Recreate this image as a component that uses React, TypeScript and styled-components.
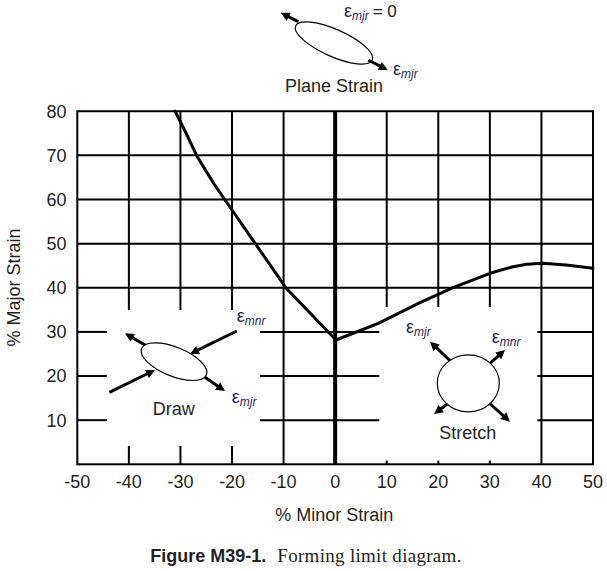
import { FC } from 'react';
import styled, { createGlobalStyle } from 'styled-components';

const GlobalStyle = createGlobalStyle`
  html,
  body {
    margin: 0;
    padding: 0;
    background: #ffffff;
  }

  body {
    font-family: 'Liberation Sans', Arial, sans-serif;
    color: #231f20;
  }
`;

const Figure = styled.figure`
  margin: 0;
  width: 607px;
  display: flex;
  flex-direction: column;
  align-items: center;
`;

const Chart = styled.svg`
  display: block;
  width: 607px;
  height: 540px;
`;

const Caption = styled.figcaption`
  display: flex;
  align-items: baseline;
  gap: 11px;
  padding: 5px 0 0 5px;
  line-height: 22px;
`;

const CaptionTag = styled.span`
  font-family: 'Liberation Sans', Arial, sans-serif;
  font-weight: 700;
  font-size: 18px;
  color: #231f20;
`;

const CaptionText = styled.span`
  font-family: 'Liberation Serif', 'Times New Roman', serif;
  font-size: 19px;
  letter-spacing: 0.3px;
  color: #231f20;
`;

const GridLine = styled.line<{ $weight?: number }>`
  stroke: #000000;
  stroke-width: ${(p) => p.$weight ?? 2};
`;

const Frame = styled.rect`
  fill: none;
  stroke: #000000;
  stroke-width: 2;
`;

const Curve = styled.polyline`
  fill: none;
  stroke: #000000;
  stroke-width: 3;
  stroke-linejoin: round;
  stroke-linecap: round;
`;

const Outline = styled.ellipse`
  fill: #ffffff;
  stroke: #000000;
  stroke-width: 1.2;
`;

const Shaft = styled.line`
  stroke: #000000;
  stroke-width: 3;
`;

const Head = styled.polygon`
  fill: #000000;
`;

const Label = styled.text<{ $anchor?: string }>`
  font-family: 'Liberation Sans', Arial, sans-serif;
  font-size: 18px;
  fill: #231f20;
  text-anchor: ${(p) => p.$anchor ?? 'start'};
`;

const EpsText = styled.text`
  font-family: 'Liberation Sans', Arial, sans-serif;
  font-size: 18px;
  fill: #1f2157;
`;

const Sub = styled.tspan`
  font-size: 12px;
  font-style: italic;
`;

const Tail = styled.tspan`
  font-size: 17px;
  font-style: normal;
  fill: #231f20;
`;

// plot scale
const sx = (v: number) => 335.15 + v * 5.157;
const sy = (v: number) => 464.3 - v * 4.4135;
const LEFT = sx(-50);
const RIGHT = sx(50);
const TOP = sy(80);
const BOTTOM = sy(0);

const hSegments: [number, number, number][] = [
  [70, LEFT, RIGHT],
  [60, LEFT, RIGHT],
  [50, LEFT, RIGHT],
  [40, LEFT, RIGHT],
  ...[30, 20, 10].flatMap((v) => [
    [v, LEFT, 107] as [number, number, number],
    [v, 260, 379.3] as [number, number, number],
    [v, 537.3, RIGHT] as [number, number, number],
  ]),
];

const vSegments: [number, number, number][] = [
  ...[-40, -30, -20].flatMap((v) => [
    [v, TOP, 310] as [number, number, number],
    [v, 446, BOTTOM] as [number, number, number],
  ]),
  [-10, TOP, BOTTOM],
  [40, TOP, BOTTOM],
  ...[10, 20, 30].flatMap((v) => [
    [v, TOP, 307] as [number, number, number],
    [v, 460.5, BOTTOM] as [number, number, number],
  ]),
];

const limitCurve = [
  [175, 111],
  [186, 133],
  [196.7, 155.7],
  [214, 184],
  [232.7, 211],
  [256, 244.6],
  [286.7, 288.8],
  [336, 340],
  [378.3, 323.3],
  [420, 302.7],
  [453, 287.7],
  [490, 273.3],
  [513, 266.7],
  [527, 264.2],
  [542.7, 263.3],
  [566, 265],
  [593, 268.3],
]
  .map(([x, y]) => `${x},${y}`)
  .join(' ');

interface ArrowProps {
  x1: number;
  y1: number;
  x2: number;
  y2: number;
}

const Arrow: FC<ArrowProps> = ({ x1, y1, x2, y2 }) => {
  const len = Math.hypot(x2 - x1, y2 - y1);
  const ux = (x2 - x1) / len;
  const uy = (y2 - y1) / len;
  const bx = x2 - ux * 9;
  const by = y2 - uy * 9;
  const hw = 4.5;
  const points = [
    [x2, y2],
    [bx - uy * hw, by + ux * hw],
    [bx + uy * hw, by - ux * hw],
  ]
    .map(([x, y]) => `${x},${y}`)
    .join(' ');

  return (
    <g>
      <Shaft x1={x1} y1={y1} x2={bx + ux} y2={by + uy} />
      <Head points={points} />
    </g>
  );
};

interface EpsProps {
  x: number;
  y: number;
  sub: string;
  tail?: string;
}

const Eps: FC<EpsProps> = ({ x, y, sub, tail }) => (
  <EpsText x={x} y={y}>
    ε
    <Sub dy={3}>{sub}</Sub>
    {tail && (
      <Tail dx={4} dy={-3}>
        {tail}
      </Tail>
    )}
  </EpsText>
);

const xTicks = [-50, -40, -30, -20, -10, 0, 10, 20, 30, 40, 50];
const yTicks = [80, 70, 60, 50, 40, 30, 20, 10];

export default function App() {
  return (
    <>
      <GlobalStyle />
      <Figure>
        <Chart viewBox="0 0 607 540">
          {hSegments.map(([v, a, b], i) => (
            <GridLine key={`h${i}`} x1={a} y1={sy(v)} x2={b} y2={sy(v)} />
          ))}
          {vSegments.map(([v, a, b], i) => (
            <GridLine key={`v${i}`} x1={sx(v)} y1={a} x2={sx(v)} y2={b} />
          ))}
          <GridLine $weight={4} x1={sx(0)} y1={TOP} x2={sx(0)} y2={BOTTOM} />
          <Frame x={LEFT} y={TOP} width={RIGHT - LEFT} height={BOTTOM - TOP} />
          <Curve points={limitCurve} />

          {/* plane strain */}
          <Outline cx={334} cy={43} rx={42} ry={13.5} transform="rotate(24 334 43)" />
          <Arrow x1={298.3} y1={21.7} x2={280.7} y2={12.7} />
          <Arrow x1={368.3} y1={60} x2={387.7} y2={70} />
          <Eps x={344} y={17} sub="mjr" tail="= 0" />
          <Eps x={393} y={75} sub="mjr" />
          <Label x={285} y={91.7}>
            Plane Strain
          </Label>

          {/* draw */}
          <Arrow x1={145} y1={345} x2={125} y2={333.3} />
          <Arrow x1={205} y1={377.3} x2={225} y2={391} />
          <Outline cx={174} cy={361.7} rx={35} ry={14.5} transform="rotate(22 174 361.7)" />
          <Arrow x1={236.7} y1={331} x2={190} y2={354} />
          <Arrow x1={109.3} y1={392.3} x2={155} y2={370} />
          <Eps x={236.7} y={321.7} sub="mnr" />
          <Eps x={231.7} y={403.3} sub="mjr" />
          <Label x={152.7} y={415}>
            Draw
          </Label>

          {/* stretch */}
          <Arrow x1={452} y1={362.5} x2={430} y2={341.7} />
          <Arrow x1={487.5} y1={365.5} x2={505} y2={350} />
          <Arrow x1={450} y1={402} x2={434} y2={414} />
          <Arrow x1={488} y1={402} x2={510} y2={421.7} />
          <Outline cx={468.3} cy={383.3} rx={31} ry={28.5} />
          <Eps x={406} y={333.3} sub="mjr" />
          <Eps x={491.7} y={342.7} sub="mnr" />
          <Label x={439.3} y={439.3}>
            Stretch
          </Label>

          {yTicks.map((v) => (
            <Label key={v} $anchor="end" x={66.5} y={sy(v) + 6.4}>
              {v}
            </Label>
          ))}
          {xTicks.map((v) => (
            <Label key={v} $anchor="middle" x={sx(v)} y={488.3}>
              {v}
            </Label>
          ))}
          <Label $anchor="middle" x={334.2} y={520.5}>
            % Minor Strain
          </Label>
          <Label $anchor="middle" transform="translate(20 287.4) rotate(-90)">
            % Major Strain
          </Label>
        </Chart>
        <Caption>
          <CaptionTag>Figure M39-1.</CaptionTag>
          <CaptionText>Forming limit diagram.</CaptionText>
        </Caption>
      </Figure>
    </>
  );
}
